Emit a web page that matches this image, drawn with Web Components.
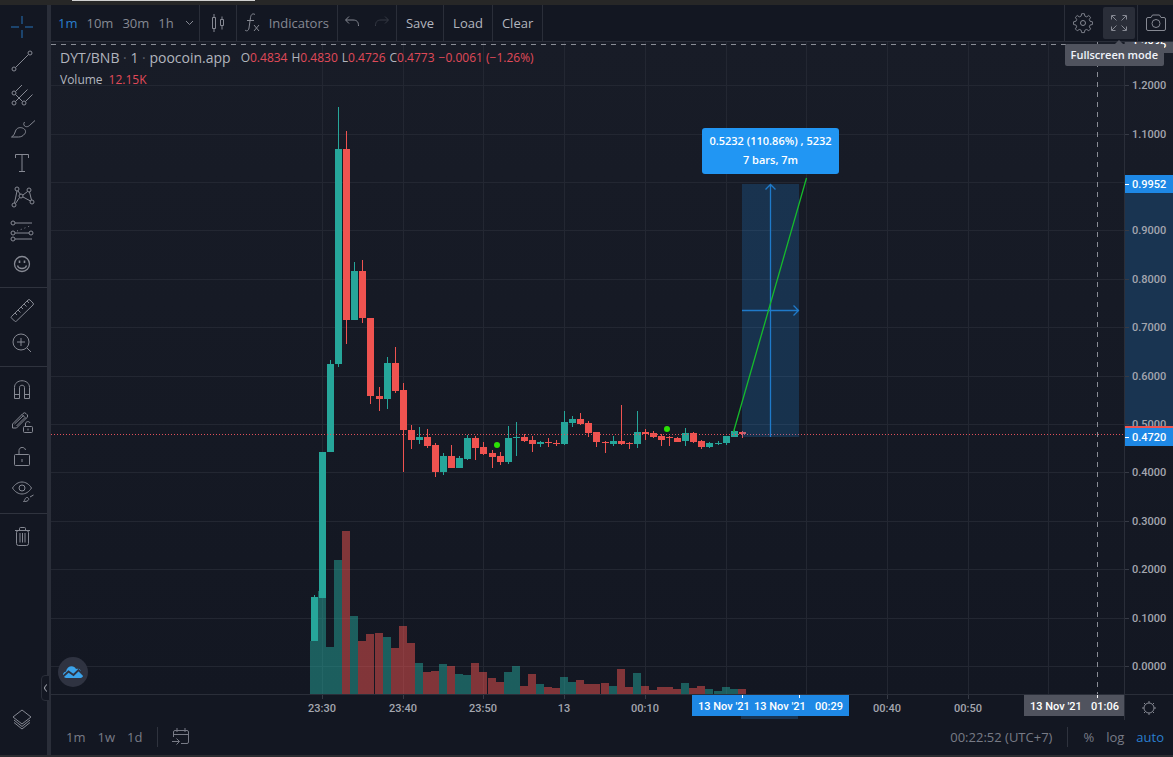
<!DOCTYPE html>
<html lang="en">
<head>
<meta charset="utf-8">
<title>DYT/BNB chart</title>
<style>
html, body {
  margin: 0;
  height: 100%;
  background: #131722;
}
body {
  font-family: "Open Sans", "Noto Sans", sans-serif;
  font-size: 13px;
  color: #787b86;
}
</style>
</head>
<body>
<chart-app></chart-app>

<script>
class Component extends HTMLElement {
  constructor(template) {
    super()
    const _template = document.createElement('template')
    _template.innerHTML = template
    this.attachShadow({ mode: 'open' })
    this.shadowRoot.appendChild(_template.content.cloneNode(true))
  }
}

const ICONS = {
  cross: '<path d="M14 3v8M14 17v8M3 14h8M17 14h8"/>',
  trend: '<circle cx="6" cy="22" r="2"/><circle cx="22" cy="6" r="2"/><path d="M7.5 20.5l13-13"/>',
  fork: '<circle cx="6" cy="12" r="2"/><circle cx="6" cy="22" r="2"/><circle cx="16" cy="22" r="2"/><path d="M7.5 10.5l6.500-6.500M7.500 13.500l7 7M7.500 20.500l12-12M17.500 20.500l7-7"/>',
  brush: '<path d="M3.500 22c2-1 3-3 4-6 1-3 4-4 7-3 3 1 4 4 2 6-1.500 2-3.500 3-6 3z"/><path d="M16.500 7c-1.500 2-.500 4 1 4.500 1.500.500 3 0 4-1l5.500-5"/>',
  text: '<path d="M7.500 9V5.500h13V9M14 5.500v17M11 22.500h6"/>',
  pattern: '<circle cx="6" cy="22" r="2"/><circle cx="9" cy="6" r="2"/><circle cx="13" cy="13" r="2"/><circle cx="21" cy="7" r="2"/><circle cx="24" cy="19" r="2"/><path d="M6.500 20L9 8M10 8l2.500 3.500M7.500 20.500l4-6M15 12l4.500-3.500M21.500 9l2 8M15 14l7.500 4"/>',
  forecast: '<circle cx="5" cy="6" r="2"/><circle cx="5" cy="16" r="2"/><circle cx="5" cy="22" r="2"/><circle cx="23" cy="16" r="2"/><path d="M7 6h17M7 16h14M7 22h17"/><path d="M9 14l13-5" stroke-dasharray="1 3"/>',
  smile: '<circle cx="14" cy="13" r="7.500" stroke-width="1.300"/><path d="M9.500 14.500c1 4 8 4 9 0" stroke-width="1.300"/><path d="M11.500 9.500v2.500M16.500 9.500v2.500" stroke-width="1.600"/>',
  ruler: '<path d="M3.500 20.500L20 4q1-1 2 0l3 3q1 1 0 2L8.500 25q-1 1-2 0l-3-3q-1-.700 0-1.500z"/><path d="M7 17l2 2M10 14l2.500 2.500M13 11l2 2M16 8l2.500 2.500M19 5l2 2"/>',
  zoom: '<circle cx="13" cy="12" r="8"/><path d="M13 8v8M9 12h8M19 18l4 4"/>',
  magnet: '<path d="M6.500 23.500v-11c0-9 15-9 15 0v11h-5v-11c0-3-5-3-5 0v11zM6.500 19.500h5M16.500 19.500h5"/>',
  pencil: '<path d="M4.500 19v-4L15 4.500q1.500-1.500 3 0l1 1q1.500 1.500 0 3L8.500 19zM14 5.500l4 4M6.500 15l9-8.500M8.500 17l8-8"/><rect x="15.500" y="17.500" width="9" height="6" rx="1"/><path d="M17.500 17.500V15c0-3 4-3 4.500-1M20 19.500v2"/>',
  lock: '<rect x="6.500" y="11.500" width="15" height="11" rx="1"/><path d="M11 11V7.500c0-4 6-4 6.500-.500M14 16v3" />',
  eye: '<path d="M4.500 11c5-8 14-8 19 0-5 8-14 8-19 0z"/><circle cx="14" cy="11" r="3"/><path d="M15.500 24.500c1.500-1 1-3 3-4 2-.500 3 2 1.500 3-1 1-3 1-4.500 1zM22 20l3.500-2"/>',
  trash: '<rect x="8.500" y="8.500" width="12" height="15" rx="2"/><path d="M7 8.500h15M11.500 8V6.500q0-1 1-1h4q1 0 1 1V8M12 11v9.500M14.500 11v9.500M17 11v9.500"/>',
  layers: '<path d="M14 5l9 7-9 7-9-7zM6 15l8 6.500 8-6.500M6 17.500l8 6.500 8-6.500"/>',
  chevron: '<path d="M11 12l3.500 3.500L18 12"/>',
  candles: '<path d="M8.500 8.500h3v11h-3zM10 5v3.500M10 19.500V23M16.500 10.500h3v6h-3zM18 7.500v3M18 16.500v4"/>',
  fx: '<path d="M14 5.500c-2.500-1.500-4 0-4.500 3L8 19c-.500 3-2.500 3.500-4 2M6 11.500h7"/><path d="M13 16l5 6M18 16l-5 6"/>',
  undo: '<path d="M9 7.500L5.500 11 9 14.500M6 11h7c4 0 5.500 2 5.500 6"/>',
  redo: '<path d="M19 7.500l3.500 3.500-3.500 3.500M22 11h-7c-4 0-5.500 2-5.500 6"/>',
  gear: '<path d="M12.500 5h3l.6 2.700 2 .8 2.300-1.500 2.100 2.100-1.500 2.300.8 2 2.700.6v3l-2.700.6-.8 2 1.500 2.300-2.100 2.100-2.300-1.500-2 .8-.6 2.700h-3l-.6-2.700-2-.8-2.300 1.500-2.100-2.100 1.500-2.300-.8-2-2.700-.6v-3l2.700-.6.8-2-1.500-2.300 2.100-2.100 2.300 1.500 2-.8z" transform="translate(1.400 .2) scale(.9)"/><circle cx="14" cy="14" r="2.500"/>',
  full: '<path d="M6.500 10.500v-4h4M17.500 6.500h4v4M21.500 17.500v4h-4M10.500 21.500h-4v-4M7 7l4.500 4.500M21 7l-4.500 4.500M21 21l-4.500-4.500M7 21l4.500-4.500"/>',
  camera: '<path d="M6 8.500h3l1.500-2.500h7L19 8.500h3q1.500 0 1.500 1.500v10q0 1.500-1.500 1.500H6q-1.500 0-1.500-1.500V10q0-1.500 1.500-1.500z"/><circle cx="14" cy="14.500" r="4"/>',
  calendar: '<path d="M6.500 14V9q0-1.500 1.500-1.500h12q1.500 0 1.500 1.500v10q0 1.500-1.500 1.500h-6M10 5v4M18 5v4M6.500 11.500h15M5 18.500h7M9.500 15.500l3 3-3 3"/>',
  sun: '<circle cx="14" cy="14" r="5"/><path d="M14 7v2M14 19v2M7 14h2M19 14h2M9 9l1.500 1.500M17.500 17.500L19 19M9 19l1.500-1.500M17.500 10.500L19 9"/>'
}

class TvIcon extends Component {
  constructor() {
    super(`
      <style>
      :host {
        display: block;
        width: 28px;
        height: 28px;
      }
      svg {
        display: block;
        fill: none;
        stroke: currentColor;
      }
      </style>
      <svg width="28" height="28" viewBox="0 0 28 28" aria-hidden="true"></svg>
    `)
  }
  static get observedAttributes() {
    return ['name']
  }
  attributeChangedCallback(attr, oldValue, newValue) {
    this.shadowRoot.querySelector('svg').innerHTML = ICONS[newValue] || ''
  }
}
window.customElements.define('tv-icon', TvIcon)

// Drawing tools down the left edge
const TOOL_GROUPS = [
  [['cross', 'Cross'], ['trend', 'Trend line'], ['fork', 'Pitchfork'], ['brush', 'Brush'],
    ['text', 'Text'], ['pattern', 'Patterns'], ['forecast', 'Prediction'], ['smile', 'Icons']],
  [['ruler', 'Measure'], ['zoom', 'Zoom in']],
  [['magnet', 'Magnet'], ['pencil', 'Stay in drawing mode'], ['lock', 'Lock drawings'], ['eye', 'Hide drawings']],
  [['trash', 'Remove drawings']]
]

class ToolRail extends Component {
  constructor() {
    const button = ([icon, label]) =>
      `<button class="${icon}" aria-label="${label}"><tv-icon name="${icon}"></tv-icon></button>`
    super(`
      <style>
      :host {
        display: flex;
        flex-direction: column;
        position: relative;
        box-sizing: border-box;
        padding: 5px 0 19px;
        border-right: 4px solid #2a2e39;
        background: #131722;
      }
      button {
        display: flex;
        justify-content: center;
        align-items: center;
        height: 34px;
        padding: 0 3px 0 0;
        border: 0;
        background: none;
        color: #868993;
        cursor: pointer;
      }
      .cross { color: #2773b8; }
      .layers { margin-top: auto; }
      hr {
        width: 100%;
        height: 1px;
        margin: 5px 0;
        border: 0;
        background: #2f333e;
      }
      .collapse {
        position: absolute;
        right: -3px;
        bottom: 54px;
        width: 9px;
        height: 26px;
        padding: 0;
        border: 1px solid #2a2e39;
        border-radius: 4px 0 0 4px;
        background: #131722;
      }
      .collapse svg {
        fill: none;
        stroke: #b2b5be;
      }
      </style>
      ${TOOL_GROUPS.map(group => group.map(button).join('')).join('<hr>')}
      ${button(['layers', 'Object tree'])}
      <button class="collapse" aria-label="Hide drawings toolbar">
        <svg width="5" height="8" viewBox="0 0 5 8"><path d="M4 .5Q-1 4 4 7.500"/></svg>
      </button>
    `)
  }
}
window.customElements.define('tool-rail', ToolRail)

class TopBar extends Component {
  constructor() {
    super(`
      <style>
      :host {
        display: flex;
        height: 36px;
        border-bottom: 1px solid #2a2e39;
        background: #131722;
      }
      .group {
        display: flex;
        align-items: center;
        border-right: 1px solid #2a2e39;
      }
      .right {
        gap: 4px;
        margin-left: auto;
        border-left: 1px solid #2a2e39;
      }
      button {
        display: flex;
        justify-content: center;
        align-items: center;
        height: 32px;
        padding: 0;
        border: 0;
        border-radius: 2px;
        background: none;
        color: #868993;
        font: inherit;
        cursor: pointer;
      }
      button:not(.on) { padding-bottom: 1px; }
      .intervals {
        padding-left: 7px;
        gap: 9px;
      }
      tv-icon { flex: none; }
      .intervals .more {
        width: 16px;
        padding-right: 4px;
        overflow: hidden;
      }
      .active { color: #2a7fcf; }
      .indicators { padding: 0 8px 0 4px; }
      .history { padding: 0 3px; }
      .history button { width: 26px; }
      .history button:disabled { color: #363a45; }
      .action { padding: 0 9px; }
      .action button { color: #b2b5be; }
      .square { padding: 0 2px; }
      .square button { width: 32px; }
      .square .on { background: #2a2e39; }
      .last {
        padding-right: 1px;
        border: 0;
      }
      </style>
      <div class="group intervals">
        <button class="active">1m</button>
        <button>10m</button>
        <button>30m</button>
        <button>1h</button>
        <button class="more" aria-label="More intervals"><tv-icon name="chevron"></tv-icon></button>
      </div>
      <div class="group square"><button aria-label="Chart style"><tv-icon name="candles"></tv-icon></button></div>
      <div class="group indicators"><button><tv-icon name="fx"></tv-icon>Indicators</button></div>
      <div class="group history">
        <button aria-label="Undo"><tv-icon name="undo"></tv-icon></button>
        <button aria-label="Redo" disabled><tv-icon name="redo"></tv-icon></button>
      </div>
      <div class="group action"><button>Save</button></div>
      <div class="group action"><button>Load</button></div>
      <div class="group action"><button>Clear</button></div>
      <div class="group square right">
        <button aria-label="Settings"><tv-icon name="gear"></tv-icon></button>
        <button class="on" aria-label="Fullscreen mode"><tv-icon name="full"></tv-icon></button>
      </div>
      <div class="group square last"><button aria-label="Take a snapshot"><tv-icon name="camera"></tv-icon></button></div>
    `)
  }
}
window.customElements.define('top-bar', TopBar)

// Scales. Every plot coordinate starts at the plot's top left corner.
const ZERO_Y = 624
const UNIT = 484
const FLOOR = 652
const priceY = price => Math.round(ZERO_Y - price * UNIT)
const barX = index => Math.round(263 + index * 8.07)

const PRICES = [1.2, 1.1, 1, 0.9, 0.8, 0.7, 0.6, 0.5, 0.4, 0.3, 0.2, 0.1, 0]
const TIMES = ['23:30', '23:40', '23:50', '13', '00:10', '', '', '00:40', '00:50', '']

// rising, high, body top, body bottom, low, volume top
const BARS = [
  [1, 553, 555, 599, 599, 599], [1, 410, 410, 556, 556, 549], [1, 318, 322, 410, 410, 605],
  [1, 65, 107, 322, 325, 518], [0, 89, 107, 278, 302, 489], [1, 220, 229, 278, 278, 574],
  [0, 218, 229, 276, 281, 599], [0, 276, 276, 354, 362, 592], [0, 345, 354, 357, 369, 591],
  [1, 315, 321, 357, 367, 595], [0, 305, 321, 349, 351, 606], [0, 341, 348, 388, 430, 584],
  [0, 383, 388, 398, 407, 601], [1, 385, 395, 398, 402, 621], [0, 387, 395, 404, 406, 630],
  [0, 401, 403, 430, 435, 629], [1, 411, 414, 430, 433, 622], [0, 403, 414, 426, 426, 624],
  [1, 414, 416, 426, 426, 632], [1, 393, 396, 417, 418, 633], [0, 394, 396, 406, 418, 621],
  [0, 400, 405, 412, 413, 630], [0, 408, 411, 415, 426, 636], [0, 410, 414, 420, 423, 640],
  [1, 384, 396, 420, 422, 630], [1, 380, 395, 396, 414, 624], [0, 392, 395, 399, 400, 644],
  [0, 394, 398, 402, 410, 632], [1, 399, 400, 402, 405, 642], [0, 396, 400, 401, 405, 645],
  [0, 398, 401, 402, 404, 646], [1, 369, 380, 402, 403, 635], [1, 374, 377, 381, 385, 640],
  [0, 371, 377, 382, 383, 638], [0, 379, 381, 391, 395, 642], [0, 390, 390, 400, 405, 642],
  [0, 399, 400, 401, 411, 641], [1, 394, 399, 402, 404, 644], [0, 363, 399, 402, 403, 627],
  [0, 400, 401, 402, 407, 645], [1, 369, 390, 402, 406, 631], [0, 387, 390, 392, 398, 644],
  [0, 389, 391, 395, 396, 648], [0, 392, 394, 398, 404, 645], [0, 394, 395, 396, 404, 645],
  [0, 395, 396, 400, 400, 647], [1, 386, 391, 399, 404, 641], [0, 390, 391, 400, 401, 646],
  [0, 398, 399, 405, 407, 644], [1, 400, 401, 405, 406, 647], [1, 399, 401, 402, 403, 649],
  [1, 394, 394, 401, 403, 645], [1, 388, 389, 395, 395, 647], [0, 389, 390, 392, 396, 647]
]

class ChartPlot extends Component {
  constructor() {
    super(`
      <style>
      :host {
        display: block;
        position: relative;
        overflow: hidden;
        background: linear-gradient(#181c27, #131722);
      }
      svg.plot {
        position: absolute;
        width: 100%;
        height: 100%;
      }
      .grid { stroke: #232732; }
      .up { fill: #26a69a; }
      .down { fill: #ef5350; }
      .volume { opacity: .5; }
      .legend {
        position: relative;
        padding: 4px 9px;
        color: #b2b5be;
      }
      .row {
        display: flex;
        align-items: center;
        gap: 6px;
        height: 22px;
        white-space: nowrap;
        font-size: 12px;
      }
      h1 {
        margin: 0;
        font-size: 14px;
        font-weight: 400;
      }
      i { color: #5d606b; font-style: normal; }
      em { color: #e04a59; font-style: normal; }
      .ohlc { display: flex; gap: 4px; margin-left: 4px; }
      .measure {
        position: absolute;
        left: 651px;
        top: 86px;
        box-sizing: border-box;
        width: 137px;
        height: 46px;
        padding: 3px 0;
        border-radius: 3px;
        background: #2196f3;
        color: #fff;
        font-size: 11px;
        font-weight: 600;
        line-height: 19px;
        text-align: center;
        white-space: nowrap;
      }
      .logo {
        position: absolute;
        left: 7px;
        bottom: 7px;
      }
      </style>
      <svg class="plot" aria-hidden="true">
        <g class="grid" shape-rendering="crispEdges"></g>
        <g class="bars" shape-rendering="crispEdges"></g>
        <path d="M0 392.500H3000" stroke="#e0505a" stroke-dasharray="1 2" fill="none"/>
        <rect x="691" y="142" width="57" height="253" fill="#2196f3" fill-opacity=".2"/>
        <g fill="none" stroke="#1f7ac9" stroke-width="1.300">
          <path d="M719.500 395V143M714.500 147.500l5-5 5 5M691 268.500h57M742.500 263.500l5 5-5 5"/>
        </g>
        <path d="M682.500 390L755.500 136" stroke="#16bb2c" stroke-width="1.300"/>
        <circle cx="446" cy="403" r="3" fill="#2be005"/>
        <circle cx="616" cy="387" r="3" fill="#2be005"/>
        <g fill="none" stroke="#8a8d96" stroke-dasharray="5 5">
          <path d="M0 2.500H3000M1046.500 0V2000"/>
        </g>
      </svg>
      <div class="legend">
        <div class="row">
          <h1>DYT/BNB <i>·</i> 1 <i>·</i> poocoin.app</h1>
          <div class="ohlc">
            <span>O<em>0.4834</em></span>
            <span>H<em>0.4830</em></span>
            <span>L<em>0.4726</em></span>
            <span>C<em>0.4773</em></span>
            <em>−0.0061 (−1.26%)</em>
          </div>
        </div>
        <div class="row"><span>Volume</span><em>12.15K</em></div>
      </div>
      <div class="measure">0.5232 (110.86%) , 5232<br>7 bars, 7m</div>
      <svg class="logo" width="30" height="30" viewBox="0 0 30 30" aria-hidden="true">
        <circle cx="15" cy="15" r="15" fill="#2f3341"/>
        <path d="M8 21c-4-.500-4-6 0-6.500 1-6 8-7 10-2.500 4-1 5 1.500 5 3.500 3 1.500 2.500 5.500-.500 5.500z" fill="#3ba3ea"/>
        <path d="M4.500 20l6-5.500 5 3.500 5-5 5 5" fill="none" stroke="#2f3341" stroke-width="1.800"/>
      </svg>
    `)
    this.shadowRoot.querySelector('.grid').innerHTML =
      PRICES.map(price => `<path d="M0 ${priceY(price) + 0.5}H3000"/>`).join('') +
      TIMES.map((time, i) => `<path d="M${barX(1 + i * 10) + 0.5} 0V${FLOOR}"/>`).join('')
    this.shadowRoot.querySelector('.bars').innerHTML = BARS.map(this.bar).join('')
  }
  bar([rising, high, top, bottom, low, volume], index) {
    const x = barX(index)
    return `
      <g class="${rising ? 'up' : 'down'}">
        <rect class="volume" x="${x - 4}" y="${volume}" width="8" height="${FLOOR - volume}"/>
        <rect x="${x}" y="${high}" width="1" height="${low - high}"/>
        <rect x="${x - 3}" y="${top}" width="7" height="${bottom - top}"/>
      </g>`
  }
}
window.customElements.define('chart-plot', ChartPlot)

class PriceScale extends Component {
  constructor() {
    const labels = PRICES.filter(price => price !== 1).map(price => `
      <path d="M0 ${priceY(price) + 0.5}h4" stroke="#363a45"/>
      <text x="7" y="${priceY(price) + 4}">${price.toFixed(4)}</text>`)
    super(`
      <style>
      :host {
        display: block;
        overflow: hidden;
        border-left: 1px solid #2a2e39;
        background: linear-gradient(#181c27, #131722);
      }
      svg {
        display: block;
        width: 100%;
        height: 100%;
        fill: #a3a6af;
        font-family: Roboto, sans-serif;
        font-size: 11px;
        font-weight: 500;
      }
      .tag { fill: #fff; }
      </style>
      <svg>
        <rect y="142" width="100%" height="253" fill="#193451"/>
        ${labels.join('')}
        <rect y="0" width="100%" height="11" fill="#50535e"/>
        <text class="tag" x="7" y="6">1.2836</text>
        <rect y="133" width="100%" height="18" fill="#1e88e5"/>
        <text class="tag" x="7" y="146">0.9952</text>
        <rect y="384" width="100%" height="2" fill="#ef5350"/>
        <rect y="386" width="100%" height="18" fill="#1e88e5"/>
        <text class="tag" x="7" y="399">0.4720</text>
        <path d="M0 142.500h4M0 395.500h4" stroke="#fff"/>
      </svg>
    `)
  }
}
window.customElements.define('price-scale', PriceScale)

class TimeScale extends Component {
  constructor() {
    const labels = TIMES.map((time, i) => ({ time, x: barX(1 + i * 10) })).filter(({ time }) => time)
    super(`
      <style>
      :host {
        display: block;
        border-top: 1px solid #2a2e39;
      }
      svg {
        display: block;
        width: 100%;
        height: 25px;
        fill: #a3a6af;
        font-family: Roboto, sans-serif;
        font-size: 11px;
        font-weight: 500;
      }
      .labels { text-anchor: middle; }
      .tag { fill: #fff; }
      </style>
      <svg>
        <g class="labels">
          ${labels.map(({ time, x }) => `
            <path d="M${x + 0.5} 0v4" stroke="#363a45"/>
            <text x="${x}" y="17">${time}</text>`).join('')}
        </g>
        <rect x="690" y="20" width="57" height="4" fill="#193451"/>
        <rect x="641" width="157" height="21" fill="#1e88e5"/>
        <text class="tag" x="647" y="15">13 Nov '21</text>
        <text class="tag" x="703" y="15">13 Nov '21</text>
        <text class="tag" x="764" y="15">00:29</text>
        <rect x="973" width="100" height="21" fill="#50535e"/>
        <text class="tag" x="979" y="15">13 Nov '21</text>
        <text class="tag" x="1040" y="15">01:06</text>
        <path d="M691.500 0v3M748.500 0v3M1046.500 0v3" stroke="#fff"/>
      </svg>
    `)
  }
}
window.customElements.define('time-scale', TimeScale)

class StatusBar extends Component {
  constructor() {
    super(`
      <style>
      :host {
        display: flex;
        align-items: center;
        height: 33px;
        padding: 0 9px 2px 15px;
      }
      button {
        padding: 0;
        border: 0;
        background: none;
        color: #787b86;
        font: inherit;
        cursor: pointer;
      }
      .ranges, .modes {
        display: flex;
        gap: 12px;
      }
      .divider {
        width: 1px;
        height: 20px;
        margin: 0 15px;
        background: #2f333e;
      }
      .clock { margin-left: auto; }
      .goto { margin-left: -6px; }
      .modes .on { color: #2a7fcf; }
      </style>
      <div class="ranges">
        <button>1m</button>
        <button>1w</button>
        <button>1d</button>
      </div>
      <div class="divider"></div>
      <button class="goto" aria-label="Go to date"><tv-icon name="calendar"></tv-icon></button>
      <button class="clock">00:22:52 (UTC+7)</button>
      <div class="divider"></div>
      <div class="modes">
        <button>%</button>
        <button>log</button>
        <button class="on">auto</button>
      </div>
    `)
  }
}
window.customElements.define('status-bar', StatusBar)

class ToolTip extends Component {
  constructor() {
    super(`
      <style>
      :host {
        display: block;
        padding: 0 6px;
        border-radius: 2px;
        background: #50535e;
        color: #f0f3fa;
        font-size: 11px;
        font-weight: 600;
        line-height: 22px;
        white-space: nowrap;
      }
      .arrow {
        position: absolute;
        right: 41px;
        top: -4px;
        border: 4px solid transparent;
        border-top: 0;
        border-bottom-color: #50535e;
      }
      </style>
      <div class="arrow"></div>
      <slot></slot>
    `)
  }
}
window.customElements.define('tool-tip', ToolTip)

class ChartApp extends Component {
  constructor() {
    super(`
      <style>
      :host {
        display: grid;
        grid-template-rows: 5px 1fr;
        grid-template-columns: 51px minmax(0, 1fr);
        box-sizing: border-box;
        height: 100vh;
        min-height: 600px;
        border-bottom: 2px solid #2b2c31;
      }
      .strip {
        grid-column: 1 / -1;
        padding-left: 72px;
        background: #272727;
      }
      .tab {
        width: 183px;
        height: 1px;
        background: #d0d0d0;
      }
      main {
        display: flex;
        flex-direction: column;
        position: relative;
        min-width: 0;
      }
      .chart {
        display: grid;
        flex: 1;
        grid-template-columns: minmax(0, 1fr) 49px;
        grid-template-rows: minmax(0, 1fr) 26px;
      }
      .corner {
        display: flex;
        justify-content: center;
        align-items: center;
        min-height: 0;
        padding: 0;
        border: 0;
        border-top: 1px solid #2a2e39;
        border-left: 1px solid #2a2e39;
        background: none;
        color: #868993;
      }
      tool-tip {
        position: absolute;
        top: 39px;
        right: 9px;
      }
      </style>
      <div class="strip"><div class="tab"></div></div>
      <tool-rail></tool-rail>
      <main>
        <top-bar></top-bar>
        <div class="chart">
          <chart-plot></chart-plot>
          <price-scale></price-scale>
          <time-scale></time-scale>
          <button class="corner" aria-label="Scale settings"><tv-icon name="sun"></tv-icon></button>
        </div>
        <status-bar></status-bar>
        <tool-tip>Fullscreen mode</tool-tip>
      </main>
    `)
  }
}
window.customElements.define('chart-app', ChartApp)
</script>
</body>
</html>
